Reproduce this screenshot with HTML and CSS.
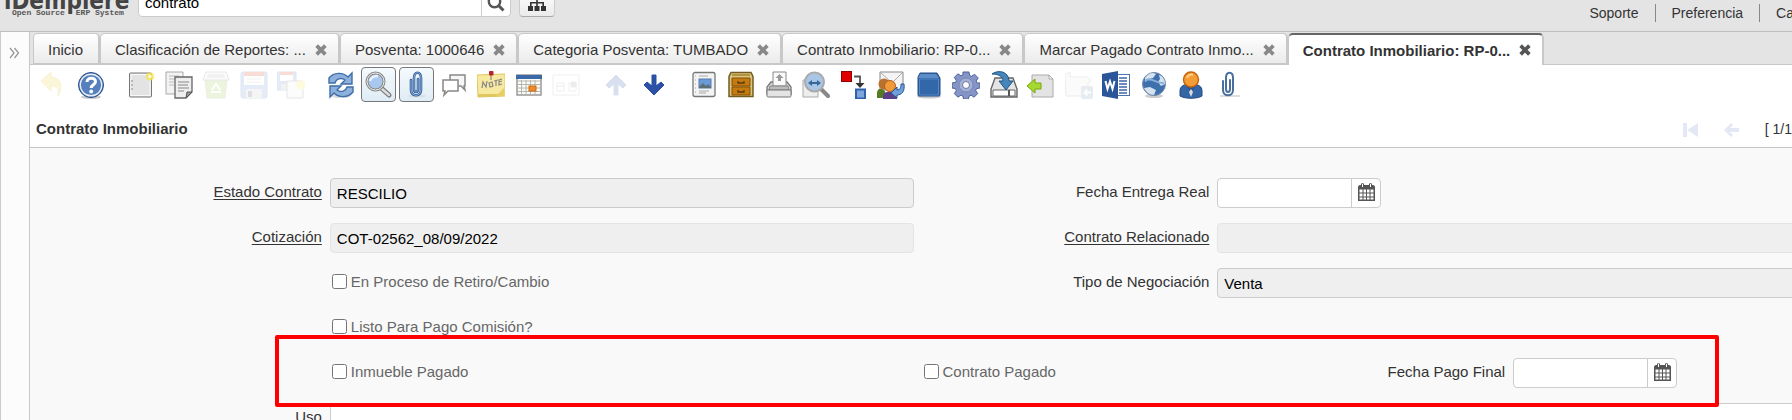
FILE: index.html
```html
<!DOCTYPE html>
<html lang="es">
<head>
    <meta charset="UTF-8">
    <meta name="viewport" content="width=device-width, initial-scale=1.0">
    <title>iDempiere</title>
    <link rel="stylesheet" href="styles.css">
</head>
<body>

    <header class="header">
        <div class="logo">
            <span class="logo-name">iDempiere</span>
            <span class="logo-sub"><span>Open Source</span><span>ERP System</span></span>
        </div>
        <form class="search">
            <input class="search-input" type="text" value="contrato" aria-label="Buscar">
            <button class="search-button" type="button" aria-label="Buscar">
                <svg width="18" height="18" viewBox="0 0 18 18"><circle cx="7.5" cy="7.5" r="5.7" fill="none" stroke="#555" stroke-width="2.4"/><path d="M11.5 11.5l5 5" stroke="#555" stroke-width="3"/></svg>
            </button>
        </form>
        <button class="menu-button" type="button" aria-label="Menu">
            <svg width="18" height="16" viewBox="0 0 18 16" fill="#333"><path d="M6.5 0h5v5H9.8v2H16v4h2v5h-5v-5h1.4V8.6H9.8V11h1.7v5h-5v-5h1.7V8.6H3.6V11H5v5H0v-5h2V7h6.2V5H6.5z"/></svg>
        </button>
        <nav class="links">
            <a href="#">Soporte</a>
            <a href="#">Preferencia</a>
            <a href="#">Ca</a>
        </nav>
    </header>

    <div class="desktop">
        <aside class="sidebar">
            <button type="button" aria-label="Expandir">
                <svg width="11" height="12" viewBox="0 0 11 12" fill="none" stroke="#999" stroke-width="1.3"><path d="M1 1l4 5-4 5M5.500 1l4 5-4 5"/></svg>
            </button>
        </aside>

        <main class="content">
            <div class="tabs">
                <div class="tab">Inicio</div>
                <div class="tab">Clasificación de Reportes: ... <button type="button" aria-label="Cerrar"><svg viewBox="0 0 11 11"><path d="M1.500 1.500l8 8M9.500 1.500l-8 8"/></svg></button></div>
                <div class="tab">Posventa: 1000646 <button type="button" aria-label="Cerrar"><svg viewBox="0 0 11 11"><path d="M1.500 1.500l8 8M9.500 1.500l-8 8"/></svg></button></div>
                <div class="tab">Categoria Posventa: TUMBADO <button type="button" aria-label="Cerrar"><svg viewBox="0 0 11 11"><path d="M1.500 1.500l8 8M9.500 1.500l-8 8"/></svg></button></div>
                <div class="tab">Contrato Inmobiliario: RP-0... <button type="button" aria-label="Cerrar"><svg viewBox="0 0 11 11"><path d="M1.500 1.500l8 8M9.500 1.500l-8 8"/></svg></button></div>
                <div class="tab">Marcar Pagado Contrato Inmo... <button type="button" aria-label="Cerrar"><svg viewBox="0 0 11 11"><path d="M1.500 1.500l8 8M9.500 1.500l-8 8"/></svg></button></div>
                <div class="tab active">Contrato Inmobiliario: RP-0... <button type="button" aria-label="Cerrar"><svg viewBox="0 0 11 11"><path d="M1.500 1.500l8 8M9.500 1.500l-8 8"/></svg></button></div>
            </div>

            <div class="toolbar">
                <button type="button" aria-label="Deshacer" disabled>
                    <svg viewBox="0 0 28 28"><path d="M1 10L11 1v5c9 0 13 9 7 19 1-7-1-10-7-10v5z" fill="#f0d030" stroke="#d8b520"/></svg>
                </button>
                <button type="button" aria-label="Ayuda">
                    <svg viewBox="0 0 28 28"><ellipse cx="14" cy="26" rx="10" ry="2" fill="#ccc"/><circle cx="14" cy="14" r="12.500" fill="#3c66a8" stroke="#2b4f8c"/><circle cx="14" cy="14" r="10.800" fill="#5580bd" stroke="#e8eef7" stroke-width="1.400"/><path d="M10 11c0-5 8.500-5 8.500-.5 0 3.500-4.300 3-4.300 6.500" fill="none" stroke="#fff" stroke-width="3"/><circle cx="14.200" cy="20.500" r="1.900" fill="#fff"/></svg>
                </button>
                <span class="separator"></span>

                <button type="button" aria-label="Nuevo">
                    <svg viewBox="0 0 28 28"><rect x="2.500" y="2" width="22" height="24" rx="1" fill="#e3e3e3" stroke="#777"/><rect x="4" y="3.500" width="19" height="21" fill="none" stroke="#f8f8f8"/><path d="M4 10h2M4 14h2M4 18h2" stroke="#888"/><circle cx="23" cy="5.500" r="4" fill="#f5e44c" opacity=".8"/><circle cx="23" cy="5.500" r="1.800" fill="#fffbd0"/></svg>
                </button>
                <button type="button" aria-label="Copiar">
                    <svg viewBox="0 0 28 28"><path d="M1 1h17v22H1z" fill="#f3f3f3" stroke="#aaa"/><path d="M4 5h10M4 8h6M4 11h5M4 14h5" stroke="#bbb"/><path d="M10 6h17v15l-6 6H10z" fill="#eee" stroke="#666" stroke-width="1.300"/><path d="M13 11h11M13 14h10M13 17h11M13 20h6" stroke="#888"/><path d="M21 27l1-6h5z" fill="#999" stroke="#555"/></svg>
                </button>
                <button type="button" aria-label="Eliminar" disabled>
                    <svg viewBox="0 0 28 28"><path d="M3 8h22l-2 19H5z" fill="#98c850" stroke="#91ae67"/><path d="M4 1h20l3 8H1z" fill="#eee" stroke="#888"/><path d="M6 3h16l1 4H5z" fill="#bbb"/><path d="M10 19l4-6 4 6M9 21h10" fill="none" stroke="#fff" stroke-width="2"/></svg>
                </button>
                <button type="button" aria-label="Guardar" disabled>
                    <svg viewBox="0 0 28 28"><rect x="1" y="1" width="26" height="26" rx="2" fill="#6f98dc" stroke="#5078b8"/><path d="M4 1h20v13H4z" fill="#fff"/><path d="M4 1h20v4H4z" fill="#e8452a"/><path d="M7 8h14M7 11h14" stroke="#bbb"/><path d="M6 18h16v9H6z" fill="#ccc"/><path d="M8 20h4v6H8z" fill="#556"/></svg>
                </button>
                <button type="button" aria-label="Guardar y crear" disabled>
                    <svg viewBox="0 0 28 28"><rect x="0" y="1" width="19" height="18" rx="1" fill="#6f98dc" stroke="#5078b8"/><path d="M3 1h13v9H3z" fill="#fff"/><path d="M3 1h13v3H3z" fill="#e8452a"/><path d="M4 13h8v6H4z" fill="#bbb"/><path d="M10 10h16v17H10z" fill="#f2f2f2" stroke="#777"/><circle cx="24" cy="14" r="4.500" fill="#f5e44c"/></svg>
                </button>
                <span class="separator"></span>

                <button type="button" aria-label="Refrescar">
                    <svg viewBox="0 0 28 28"><ellipse cx="14" cy="25" rx="10" ry="2" fill="#ddd"/><path d="M2 12V7c5-6 14-6 19-1l4-4v11H14l4-4c-4-3-9-1-10 3z" fill="#8db0dc" stroke="#3f6ea8" stroke-width="1.400"/><path d="M26 16v5c-5 6-14 6-19 1l-4 4V15h11l-4 4c4 3 9 1 10-3z" fill="#8db0dc" stroke="#3f6ea8" stroke-width="1.400"/></svg>
                </button>
                <button class="pressed" type="button" aria-label="Buscar registro">
                    <svg viewBox="0 0 28 28"><path d="M15 16l9 8" stroke="#777" stroke-width="5" stroke-linecap="round"/><path d="M16 17l8 7" stroke="#ddd" stroke-width="2.500" stroke-linecap="round"/><circle cx="10.500" cy="10.500" r="8.500" fill="#a9c8ee" stroke="#888" stroke-width="3"/><circle cx="10.500" cy="10.500" r="8.500" fill="none" stroke="#eee"/><path d="M5 10c1-4 4-5 8-5" fill="none" stroke="#e6f1fd" stroke-width="2.500"/></svg>
                </button>
                <button class="pressed" type="button" aria-label="Anexo">
                    <svg viewBox="0 0 28 28"><ellipse cx="15" cy="25" rx="9" ry="1.500" fill="#d5dde5"/><path d="M9 9v10c0 7 10 7 10 0V7c0-7-7-7-7 0v11c0 4 4 4 4 0V8" fill="none" stroke="#315d99" stroke-width="2.600" stroke-linecap="round"/><path d="M9 9v10c0 7 10 7 10 0V7c0-7-7-7-7 0v11c0 4 4 4 4 0V8" fill="none" stroke="#8eb1de" stroke-width="1" stroke-linecap="round"/></svg>
                </button>
                <button type="button" aria-label="Chat">
                    <svg viewBox="0 0 28 28"><path d="M10 4h15v11h-1l1 4-4-4H10z" fill="#f6f6f6" stroke="#888" stroke-width="1.500"/><path d="M3 9h15v11H8l-4 4 1-4H3z" fill="#fff" stroke="#888" stroke-width="1.500"/></svg>
                </button>
                <button type="button" aria-label="Nota">
                    <svg viewBox="0 0 28 28"><path d="M0 4l28-1v22l-27 1z" fill="#f7e9a0" stroke="#dcc55f"/><path d="M1 26l26-1v-2H1z" fill="#e0c65c"/><path d="M19 25l8-8v8z" fill="#e8cf64"/><path d="M5 17l1-6 3 5 1-6M12 12l3-1 1 4-3 1zM17 10l4-1M19 10v5M25 8l-3 1v5l3-1M22 11l3-1" fill="none" stroke="#888" stroke-width="1.200"/><path d="M14 4v5" stroke="#777"/><rect x="12" y="0" width="4.500" height="4.500" rx="1" fill="#b8242b"/></svg>
                </button>
                <button type="button" aria-label="Calendario">
                    <svg viewBox="0 0 28 28"><rect x="2" y="4" width="24" height="20" fill="#fbfbf7" stroke="#999" stroke-width="1.500"/><path d="M1 4h26v4H1z" fill="#3b69a8"/><path d="M3 10h22M3 13.500h22M3 17h22M3 20.500h22M6.500 9v14M11 9v14M15.500 9v14M20 9v14" stroke="#b6b6ae"/><rect x="14" y="15" width="7" height="5" fill="#f08a24" stroke="#cc6b12"/></svg>
                </button>
                <button type="button" aria-label="Cuadricula" disabled>
                    <svg viewBox="0 0 28 28" fill="none" stroke="#aaa"><path d="M1 4h26v20H1z"/><path d="M5 12h7v8H5zM5 15h7M17 12h7v8h-7z"/><path d="M19 11h5v5h-5z" fill="#999"/></svg>
                </button>
                <span class="separator"></span>

                <button type="button" aria-label="Registro padre" disabled>
                    <svg viewBox="0 0 28 28"><path d="M14 4l10 10-3 3-5-4v11h-4V13l-5 4-3-3z" fill="#2f55a8" stroke="#2f55a8"/></svg>
                </button>
                <button type="button" aria-label="Registro detalle">
                    <svg viewBox="0 0 28 28"><path d="M14 24L4 14l3-3 5 4V4h4v11l5-4 3 3z" fill="#2b50a5" stroke="#2b50a5"/></svg>
                </button>
                <span class="separator"></span>

                <button type="button" aria-label="Informe">
                    <svg viewBox="0 0 28 28"><rect x="3" y="1.500" width="22" height="24" rx="2" fill="#f3f3f3" stroke="#777" stroke-width="1.300"/><path d="M5 5h1M5 9h1M5 13h1M5 17h1M5 21h1M9 5h9M9 20h10M9 22h7" stroke="#aaa"/><rect x="9" y="8" width="12" height="9" fill="#6a9bd8" stroke="#547bad"/><path d="M9 16l4-4 3 3 2-2 3 3v1H9z" fill="#5c6f75"/></svg>
                </button>
                <button type="button" aria-label="Archivo">
                    <svg viewBox="0 0 28 28"><path d="M4 1.500h20l2 4v20H2v-20z" fill="#d9c57c" stroke="#745b22" stroke-width="1.500"/><path d="M5 7h18v8H5zM5 16h18v8H5z" fill="#c47a10" stroke="#845006"/><path d="M5 4h18" stroke="#b39441" stroke-width="2"/><path d="M11 10v2h6v-2M11 19v2h6v-2" fill="none" stroke="#573b0c" stroke-width="1.300"/></svg>
                </button>
                <button type="button" aria-label="Imprimir">
                    <svg viewBox="0 0 28 28"><path d="M6 11h16l4 5v7H2v-7z" fill="#d8d8d8" stroke="#777" stroke-width="1.300"/><path d="M8 1h13v14H8z" fill="#fafafa" stroke="#888"/><path d="M14.500 3l4 4h-2.500v3h-3V7h-2.500z" fill="#999"/><path d="M5 15h18l1 4H4z" fill="#bbb" stroke="#888"/><path d="M2 19h24v6c0 1-1 1-2 1H4c-1 0-2 0-2-1z" fill="#e4e4e4" stroke="#777"/></svg>
                </button>
                <button type="button" aria-label="Zoom">
                    <svg viewBox="0 0 28 28"><path d="M1 9h15v17H1z" fill="#eee" stroke="#aaa"/><path d="M19 18l7 7" stroke="#888" stroke-width="4" stroke-linecap="round"/><circle cx="12.500" cy="11" r="9.500" fill="#a9c6e7" stroke="#aaa" stroke-width="2"/><path d="M6 12l4-3v2h5V9l4 3-4 3v-2h-5v2z" fill="#376796"/></svg>
                </button>
                <button type="button" aria-label="Flujo de trabajo">
                    <svg viewBox="0 0 28 28"><rect x="1.500" y="0.500" width="10" height="10" fill="#e00000" stroke="#930000"/><rect x="16" y="18.500" width="9" height="9" fill="#7ea6dd" stroke="#2f62ab" stroke-width="2"/><path d="M14 5.500h6v8" fill="none" stroke="#555" stroke-width="1.800"/><path d="M15.500 12h9L20 17z" fill="#333"/></svg>
                </button>
                <button type="button" aria-label="Solicitud">
                    <svg viewBox="0 0 28 28"><path d="M3 1h23v18H3z" fill="#f4f4f4" stroke="#888"/><path d="M3 1l12 11L26 1" fill="none" stroke="#aaa"/><path d="M0 27v-5c0-6 9-6 9 3v2z" fill="#567c22"/><path d="M6 28v-3c0-6 14-6 14 0v3z" fill="#5c3f87"/><circle cx="7" cy="13" r="5.500" fill="#b8712f"/><circle cx="13" cy="15" r="5.500" fill="#f09a3c" stroke="#b46016"/><path d="M14 22l6-6v3c3 0 4-2 4-6h3c1 7-2 11-7 11v3z" fill="#70a0dc" stroke="#275594"/></svg>
                </button>
                <button type="button" aria-label="Producto">
                    <svg viewBox="0 0 28 28"><ellipse cx="14" cy="25.500" rx="12" ry="2" fill="#ccc"/><path d="M5 2h17l3 5v17c0 1-1 1-2 1H4c-1 0-1-1-1-2V6z" fill="#3267aa" stroke="#234c84"/><path d="M5 3h16l3 4H3z" fill="#5c8cc8"/><path d="M4.500 8h19v16h-19z" fill="none" stroke="#5586c3"/></svg>
                </button>
                <button type="button" aria-label="Proceso">
                    <svg viewBox="0 0 28 28"><path d="M11 1h6l.6 3.500 2 .8 3-2 3.600 3.600-2 3 .8 2L28 12v5l-3.500.6-.8 2 2 3-3.600 3.600-3-2-2 .8-.6 3h-5l-.6-3-2-.8-3 2-3.600-3.600 2-3-.8-2L0 17v-5l3.500-.6.8-2-2-3 3.600-3.600 3 2 2-.8z" fill="#8595c7" stroke="#4c639c"/><circle cx="14" cy="14" r="7" fill="#a5b1d5" stroke="#7786b4"/><circle cx="14" cy="14" r="3.500" fill="#fff" stroke="#6676a8"/></svg>
                </button>
                <button type="button" aria-label="Exportar">
                    <svg viewBox="0 0 28 28"><path d="M5 7h18l4 11v8H1v-8z" fill="#e4e4e4" stroke="#666" stroke-width="1.400"/><path d="M3 19h22v6H3z" fill="#fff" stroke="#666"/><path d="M18 19h2v6h-2z" fill="#555"/><path d="M2 3c7-5 17-2 17 7h4l-7 9-7-9h4c0-4-4-7-11-7z" fill="#4686bb" stroke="#1d5684"/></svg>
                </button>
                <button type="button" aria-label="Importar">
                    <svg viewBox="0 0 28 28"><path d="M7 4h15l4 4v18H5V4z" fill="#e3e3e3" stroke="#aaa"/><path d="M22 4v4h4z" fill="#fff" stroke="#aaa"/><path d="M0 15l8-7v4h6v6H8v4z" fill="#a6d92f" stroke="#76a80e"/></svg>
                </button>
                <button type="button" aria-label="Carga CSV" disabled>
                    <svg viewBox="0 0 28 28"><path d="M0 4l5-3v5h17c4 0 4 6 1 6v13H1z" fill="#eee" stroke="#999"/><rect x="16" y="15" width="12" height="13" rx="2" fill="#7f9bbb"/><path d="M26 21.500h-6l2-3M20 21.500l2 3" fill="none" stroke="#fff" stroke-width="2"/></svg>
                </button>
                <button type="button" aria-label="Word">
                    <svg viewBox="0 0 28 28"><rect x="14" y="3.500" width="13.500" height="21" fill="#fff" stroke="#4c72b0"/><path d="M17 7h8M17 10h8M17 13h8M17 16h8M17 19h8M17 22h8" stroke="#3f67a8" stroke-width="1.300"/><path d="M0 3l16-3v28L0 25z" fill="#2a5699"/><path d="M3.500 10l2 8L8 10.500l2.500 7.500 2-8" fill="none" stroke="#fff" stroke-width="2"/></svg>
                </button>
                <button type="button" aria-label="Web">
                    <svg viewBox="0 0 28 28"><ellipse cx="14" cy="25" rx="9" ry="2" fill="#ccc"/><circle cx="14" cy="13" r="11.500" fill="#3e70ad" stroke="#788da6"/><path d="M5 7c3-5 8-6 11-4l-3 4-4 1-4 3zM19 4c4 1 6 5 6 9l-4 2-3-4 2-3zM4 17l6-1 6 3-2 5c-5 0-8-3-10-7z" fill="#d5e2f0"/><path d="M5 10c5-5 12 3 19 2" fill="none" stroke="#88afd9" stroke-width="2"/></svg>
                </button>
                <button type="button" aria-label="Usuario">
                    <svg viewBox="0 0 28 28"><path d="M3 25v-5c0-5 4-7 11-7s11 2 11 7v5c-5 3-17 3-22 0z" fill="#3465a4" stroke="#204a87"/><path d="M9 15l5 6 5-6" fill="#2b5490"/><path d="M14 18l2 3-2 5-2-5z" fill="#ddd"/><circle cx="14" cy="8.500" r="7.500" fill="#f59d35" stroke="#c66209" stroke-width="1.400"/><path d="M10 7c1-3 4-4 6-3" fill="none" stroke="#fdce89" stroke-width="2"/></svg>
                </button>
                <button type="button" aria-label="Adjuntos">
                    <svg viewBox="0 0 28 28"><path d="M5 25h20" stroke="#ddd" stroke-width="2"/><path d="M8 10v9c0 7 10 7 10 0V7c0-7-7-7-7 0v11c0 4 4 4 4 0V9" fill="none" stroke="#496f9f" stroke-width="2" stroke-linecap="round"/></svg>
                </button>
            </div>

            <div class="titlebar">
                <h1>Contrato Inmobiliario</h1>
                <div class="pager">
                    <button type="button" aria-label="Primero" disabled><svg width="15" height="14" viewBox="0 0 15 14"><path d="M0 0h4v14H0zM15 0v14L4 7z"/></svg></button>
                    <button type="button" aria-label="Anterior" disabled><svg width="15" height="14" viewBox="0 0 15 14"><path d="M0 7l7-7 2 2-3 3h9v4H6l3 3-2 2z"/></svg></button>
                    <span>[ 1/1</span>
                </div>
            </div>

            <form class="form">
                <div class="row">
                    <label class="linked" for="estado">Estado Contrato</label>
                    <input id="estado" class="field wide readonly" type="text" value="RESCILIO" readonly>
                    <label for="entrega">Fecha Entrega Real</label>
                    <div class="date">
                        <input id="entrega" type="text">
                        <button type="button" aria-label="Elegir fecha"><svg width="17" height="18" viewBox="0 0 17 18"><path d="M0 4c0-1 1-2 2-2h1V1c0-1 3-1 3 0v1h5V1c0-1 3-1 3 0v1h1c1 0 2 1 2 2v14H0z" fill="#555"/><path d="M4.500 1v3M12.500 1v3" stroke="#fff"/><path d="M1.500 6.500h3v3h-3zM5.500 6.500h2.500v3H5.500zM9 6.500h2.500v3H9zM12.500 6.500h3v3h-3zM1.500 10.500h3v3h-3zM5.500 10.500h2.500v3H5.500zM9 10.500h2.500v3H9zM12.500 10.500h3v3h-3zM1.500 14.500h3v2h-3zM5.500 14.500h2.500v2H5.500zM9 14.500h2.500v2H9zM12.500 14.500h3v2h-3z" fill="#fff"/></svg></button>
                    </div>
                </div>
                <div class="row">
                    <label class="linked" for="cotizacion">Cotización</label>
                    <input id="cotizacion" class="field wide readonly light" type="text" value="COT-02562_08/09/2022" readonly>
                    <label class="linked" for="relacionado">Contrato Relacionado</label>
                    <input id="relacionado" class="field wide readonly light" type="text" readonly>
                </div>
                <div class="row">
                    <div class="check second"><input id="retiro" type="checkbox"><label for="retiro">En Proceso de Retiro/Cambio</label></div>
                    <label for="tipo">Tipo de Negociación</label>
                    <input id="tipo" class="field wide readonly" type="text" value="Venta" readonly>
                </div>
                <div class="row">
                    <div class="check second"><input id="comision" type="checkbox"><label for="comision">Listo Para Pago Comisión?</label></div>
                </div>
                <div class="row">
                    <div class="check second"><input id="inmueble" type="checkbox"><label for="inmueble">Inmueble Pagado</label></div>
                    <div class="check"><input id="contrato" type="checkbox"><label for="contrato">Contrato Pagado</label></div>
                    <label for="pago">Fecha Pago Final</label>
                    <div class="date">
                        <input id="pago" type="text">
                        <button type="button" aria-label="Elegir fecha"><svg width="17" height="18" viewBox="0 0 17 18"><path d="M0 4c0-1 1-2 2-2h1V1c0-1 3-1 3 0v1h5V1c0-1 3-1 3 0v1h1c1 0 2 1 2 2v14H0z" fill="#555"/><path d="M4.500 1v3M12.500 1v3" stroke="#fff"/><path d="M1.500 6.500h3v3h-3zM5.500 6.500h2.500v3H5.500zM9 6.500h2.500v3H9zM12.500 6.500h3v3h-3zM1.500 10.500h3v3h-3zM5.500 10.500h2.500v3H5.500zM9 10.500h2.500v3H9zM12.500 10.500h3v3h-3zM1.500 14.500h3v2h-3zM5.500 14.500h2.500v2H5.500zM9 14.500h2.500v2H9zM12.500 14.500h3v2h-3z" fill="#fff"/></svg></button>
                    </div>
                    <div class="highlight"></div>
                </div>
                <div class="row">
                    <label for="uso">Uso</label>
                    <textarea id="uso" class="field full"></textarea>
                </div>
            </form>
        </main>
    </div>

</body>
</html>
```
FILE: styles.css
```css
* {
    box-sizing: border-box;
}

body {
    margin: 0;
    height: 100vh;
    display: flex;
    flex-direction: column;
    overflow: hidden;
    background-color: #e4e4e4;
    color: #333;
    font-family: "Liberation Sans", Arial, sans-serif;
    font-size: 15px;
}

button {
    display: flex;
    align-items: center;
    justify-content: center;
    padding: 0;
    border: none;
    background: none;
    cursor: pointer;
}

input,
textarea {
    font-family: inherit;
    font-size: 15px;
    color: #000;
}

/* Header */
.header {
    flex: none;
    display: flex;
    align-items: flex-end;
    height: 32px;
    padding-bottom: 14px;
    border-bottom: 1px solid #bebebe;
}

.logo {
    display: flex;
    flex-direction: column;
    width: 138px;
    padding-left: 4px;
}

.logo-name {
    font-family: "DejaVu Sans Condensed", "DejaVu Sans", sans-serif;
    font-size: 24px;
    font-weight: bold;
    line-height: 16px;
    color: #444;
}

.logo-sub {
    display: flex;
    gap: 11px;
    padding-left: 8px;
    font-family: "Liberation Mono", monospace;
    font-size: 8px;
    font-weight: bold;
    line-height: 8px;
    color: #555;
}

.search {
    display: flex;
    width: 373px;
    height: 29px;
    margin-right: 8px;
    background: white;
    border: 1px solid #ccc;
    border-radius: 4px;
}

.search-input {
    flex: 1;
    min-width: 0;
    padding: 0 6px;
    border: none;
    background: none;
}

.search-button {
    width: 29px;
    border-left: 1px solid #ccc;
}

.menu-button {
    width: 36px;
    height: 29px;
    background: linear-gradient(#fff, #ebebeb);
    border: 1px solid #ccc;
    border-bottom-color: #aaa;
    border-radius: 4px;
}

.links {
    display: flex;
    margin-left: auto;
    margin-right: -2px;
    margin-bottom: -5px;
}

.links a {
    padding: 0 16px;
    border-right: 1px solid #888;
    font-size: 14px;
    line-height: 18px;
    color: #333;
    text-decoration: none;
}

.links a:last-child {
    padding-right: 0;
    border-right: none;
}

/* Desktop */
.desktop {
    flex: 1;
    display: flex;
    min-height: 0;
}

.sidebar {
    flex: none;
    width: 30px;
    padding: 15px 0 0 8px;
    background-color: #fcfcfc;
    border-left: 1px solid #ccc;
    border-right: 1px solid #c8c8c8;
}

.content {
    flex: 1;
    display: flex;
    flex-direction: column;
    min-width: 0;
    overflow: hidden;
    background-color: white;
}

.tabs {
    flex: none;
    display: flex;
    height: 33px;
    padding: 1px 0 0 3px;
    background-color: #e4e4e4;
    border-bottom: 1px solid #c8c8c8;
}

.tab {
    display: flex;
    align-items: center;
    gap: 9px;
    height: 31px;
    padding: 2px 12px 0 14px;
    border: 1px solid #c8c8c8;
    border-right-width: 2px;
    border-radius: 5px 5px 0 0;
    background: linear-gradient(#fff, #ebebeb);
    white-space: nowrap;
}

.tab:first-child {
    padding-right: 15px;
}

.tab svg {
    width: 12px;
    height: 12px;
    margin-right: -1px;
    stroke: #888;
    stroke-width: 3.4;
}

.tab.active {
    height: 32px;
    padding-top: 0;
    background: white;
    border-top: 2px solid #666;
    border-bottom: none;
    font-weight: bold;
}

.tab.active svg {
    stroke: #555;
}

/* Toolbar */
.toolbar {
    flex: none;
    display: flex;
    justify-content: space-between;
    width: 100%;
    max-width: 1222px;
    height: 42px;
    padding: 2px 6px 0;
}

.toolbar button {
    width: 35px;
    height: 35px;
    border-radius: 4px;
}

.toolbar svg {
    width: 28px;
    height: 28px;
}

.toolbar button:disabled svg {
    opacity: 0.18;
}

.toolbar .pressed {
    border: 1px solid #777;
    background: linear-gradient(#f5fafd, #dfecf5);
}

.separator {
    width: 10px;
}

/* Title */
.titlebar {
    flex: none;
    display: flex;
    align-items: center;
    justify-content: space-between;
    height: 41px;
    padding: 3px 0 0 6px;
    border-bottom: 1px solid #c4c4c4;
}

h1 {
    margin: 0;
    font-size: 15px;
}

.pager {
    display: flex;
    align-items: center;
    gap: 26px;
    font-size: 14px;
}

.pager button {
    padding-top: 3px;
}

.pager svg {
    fill: #e4e8f4;
}

/* Form */
.form {
    flex: 1;
    display: flex;
    flex-direction: column;
    gap: 15px;
    margin-right: -17px;
    padding: 30px 0 0 4px;
    background-color: #f9f9f9;
}

.row {
    position: relative;
    flex: none;
    display: grid;
    grid-template-columns: repeat(6, 1fr);
    grid-template-rows: 30px;
    align-items: center;
    height: 30px;
}

.row > label {
    padding-right: 8px;
    padding-bottom: 3px;
    text-align: right;
}

.linked {
    text-decoration: underline;
    text-underline-offset: 2px;
}

.field {
    height: 30px;
    margin-right: 8px;
    padding: 0 6px;
    border: 1px solid #ccc;
    border-radius: 4px;
}

.wide {
    grid-column: span 2;
}

.full {
    grid-column: span 5;
    align-self: start;
    height: 60px;
    margin-right: 0;
    border-radius: 0;
    resize: none;
}

.readonly {
    background-color: #efefef;
}

.light {
    border-color: #e4e4e4;
}

.check {
    display: flex;
    align-items: center;
    gap: 4px;
    padding: 0 0 3px 2px;
    color: #666;
}

.check input {
    width: 15px;
    height: 15px;
    margin: 0;
}

.second {
    grid-column: 2 / span 2;
}

.date {
    display: flex;
    width: 164px;
    height: 30px;
    background: white;
    border: 1px solid #ccc;
    border-radius: 4px;
}

.date input {
    flex: 1;
    min-width: 0;
    border: none;
    background: none;
}

.date button {
    width: 29px;
    padding-bottom: 3px;
    border-left: 1px solid #ccc;
}

/* Red frame over the payment row */
.highlight {
    position: absolute;
    z-index: 1;
    top: -23px;
    bottom: -19px;
    left: 241px;
    right: 90px;
    border: 4px solid #f00;
    border-radius: 2px;
    pointer-events: none;
}
```
